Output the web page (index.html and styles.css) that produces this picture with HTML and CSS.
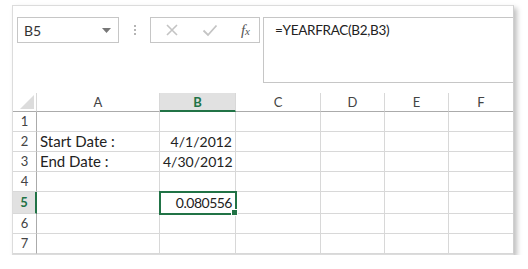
FILE: index.html
```html
<!DOCTYPE html>
<html lang="en">
<head>
  <meta charset="UTF-8" />
  <title>YEARFRAC</title>
  <link rel="stylesheet" href="styles.css">
</head>
<body>
  <div class="frame">
    <div class="toolbar">
      <div class="namebox">
        <span>B5</span>
        <svg width="9" height="5" viewBox="0 0 9 5"><path d="M0 0h9L4.5 5z" fill="#777"/></svg>
      </div>
      <div class="grip"><i></i><i></i><i></i></div>
      <div class="btns">
        <svg width="14" height="14" viewBox="0 0 14 14"><path d="M2 2l10 10M12 2L2 12" stroke="#c4c4c4" stroke-width="1.6" fill="none"/></svg>
        <svg width="16" height="14" viewBox="0 0 16 14"><path d="M1.5 7.5l4.5 4.5L14.5 2.5" stroke="#c4c4c4" stroke-width="1.8" fill="none"/></svg>
        <span class="fx">f<span>x</span></span>
      </div>
      <div class="formula">=YEARFRAC(B2,B3)</div>
    </div>

    <div class="sheet">
      <div class="corner"><svg width="14" height="14" viewBox="0 0 14 14"><path d="M14 0v14H0z" fill="#dcdcdc"/></svg></div>
      <div class="col">A</div>
      <div class="col active">B</div>
      <div class="col">C</div>
      <div class="col">D</div>
      <div class="col">E</div>
      <div class="col">F</div>

      <div class="row">1</div>
      <div class="cell"></div><div class="cell"></div><div class="cell"></div><div class="cell"></div><div class="cell"></div><div class="cell"></div>

      <div class="row">2</div>
      <div class="cell">Start Date :</div><div class="cell num">4/1/2012</div><div class="cell"></div><div class="cell"></div><div class="cell"></div><div class="cell"></div>

      <div class="row">3</div>
      <div class="cell">End Date :</div><div class="cell num">4/30/2012</div><div class="cell"></div><div class="cell"></div><div class="cell"></div><div class="cell"></div>

      <div class="row">4</div>
      <div class="cell"></div><div class="cell"></div><div class="cell"></div><div class="cell"></div><div class="cell"></div><div class="cell"></div>

      <div class="row active tall">5</div>
      <div class="cell tall"></div><div class="cell num tall selected">0.080556</div><div class="cell tall"></div><div class="cell tall"></div><div class="cell tall"></div><div class="cell tall"></div>

      <div class="row">6</div>
      <div class="cell"></div><div class="cell"></div><div class="cell"></div><div class="cell"></div><div class="cell"></div><div class="cell"></div>

      <div class="row">7</div>
      <div class="cell"></div><div class="cell"></div><div class="cell"></div><div class="cell"></div><div class="cell"></div><div class="cell"></div>
    </div>
  </div>
</body>
</html>
```

FILE: styles.css
```css
* { margin: 0; padding: 0; box-sizing: border-box; }

body {
  background: #ffffff;
  font-family: Lato, 'Liberation Sans', sans-serif;
  color: #222;
}

.frame {
  margin: 5px 0 0 12px;
  width: 502px;
  background: #fff;
  border: 1px solid #dcdcdc;
  border-right-color: #d0d0d0;
  box-shadow: 3px 3px 5px rgba(0,0,0,0.25);
}

/* formula bar */
.toolbar {
  display: flex;
  align-items: flex-start;
  padding-top: 11px;
  height: 87px;
}

.namebox {
  margin-left: 4px;
  width: 102px; height: 26px;
  border: 1px solid #c6c6c6;
  display: flex; align-items: center; justify-content: space-between;
  padding: 0 7px 0 6px;
  font-size: 14px; color: #333;
}

.grip {
  width: 31px; height: 26px;
  display: flex; flex-direction: column; align-items: center; justify-content: center;
  gap: 2px;
}
.grip i { width: 2px; height: 2px; background: #b5b5b5; display: block; }

.btns {
  width: 110px; height: 26px;
  border: 1px solid #c6c6c6;
  display: flex; align-items: center; justify-content: space-between;
  padding: 0 9px 0 14px;
}
.fx {
  font-family: 'Liberation Serif', serif;
  font-style: italic; font-size: 15px; color: #555;
}
.fx span { font-size: 11px; }

.formula {
  margin-left: 3px;
  flex: 1;
  height: 66px;
  border-top: 1px solid #c6c6c6;
  border-bottom: 1px solid #c6c6c6;
  border-left: 1px solid #c6c6c6;
  padding: 4px 0 0 11px;
  font-size: 13.5px; color: #222;
  letter-spacing: -0.3px;
}

/* grid */
.sheet {
  display: grid;
  grid-template-columns: 24px 123px 76px 85px 64px 64px 64px;
  grid-template-rows: 19px repeat(4, 20px) 22px 20px 20px;
  font-size: 15px;
}

.corner {
  border-right: 1px solid #d8d8d8;
  border-bottom: 1px solid #ababab;
  display: flex; align-items: flex-end; justify-content: flex-end;
  padding: 0 2px 2px 0;
}

.col {
  border-right: 1px solid #d8d8d8;
  border-bottom: 1px solid #ababab;
  text-align: center;
  font-size: 13px; color: #444;
  line-height: 18px;
}
.col:nth-child(7) { border-right: none; }
.col.active {
  background: #e1e1e1;
  border-bottom: 2px solid #217346;
  color: #217346; font-weight: bold;
}

.row {
  border-right: 1px solid #ababab;
  border-bottom: 1px solid #d8d8d8;
  text-align: center;
  font-size: 13px; color: #444;
  line-height: 19px;
}
.row.active {
  background: #e1e1e1;
  border-right: 2px solid #217346;
  color: #217346; font-weight: bold;
  line-height: 21px;
}

.cell {
  border-right: 1px solid #d8d8d8;
  border-bottom: 1px solid #d8d8d8;
  padding: 0 3px;
  line-height: 19px;
  white-space: nowrap;
}
.cell:nth-child(7n) { border-right: none; }
.cell.num { text-align: right; font-size: 14px; }
.cell.tall { line-height: 21px; }

.selected {
  position: relative;
  outline: 2px solid #217346;
  outline-offset: -1px;
  font-size: 15.5px;
  letter-spacing: -0.5px;
}
.selected::after {
  content: '';
  position: absolute;
  right: -3px; bottom: -3px;
  width: 5px; height: 5px;
  background: #217346;
  border: 1px solid #fff;
}
```
